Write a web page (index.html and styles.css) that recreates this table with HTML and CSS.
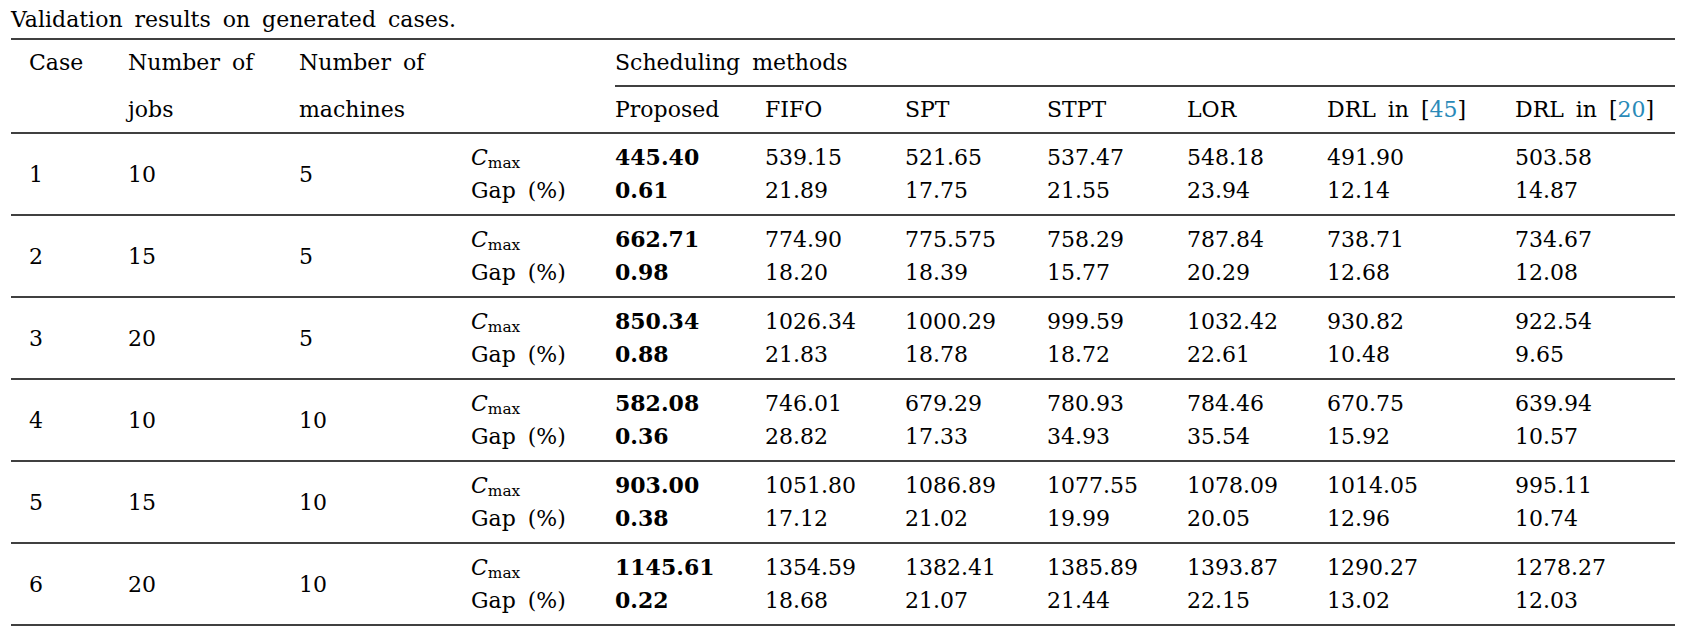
FILE: index.html
```html
<!DOCTYPE html>
<html lang="en">
<head>
<meta charset="utf-8">
<title>Validation results on generated cases</title>
<link rel="stylesheet" href="styles.css">
</head>
<body>
<div class="page">
  <p class="caption">Validation results on generated cases.</p>
  <table class="results">
    <colgroup>
      <col class="c-case"><col class="c-jobs"><col class="c-mach"><col class="c-label">
      <col class="c-prop"><col class="c-fifo"><col class="c-spt"><col class="c-stpt">
      <col class="c-lor"><col class="c-drl45"><col class="c-drl20">
    </colgroup>
    <thead>
      <tr class="h1">
        <th>Case</th>
        <th>Number of</th>
        <th>Number of</th>
        <th></th>
        <th colspan="7" class="group"><div class="group-rule">Scheduling methods</div></th>
      </tr>
      <tr class="h2">
        <th></th>
        <th>jobs</th>
        <th>machines</th>
        <th></th>
        <th>Proposed</th>
        <th>FIFO</th>
        <th>SPT</th>
        <th>STPT</th>
        <th>LOR</th>
        <th>DRL in [<span class="ref">45</span>]</th>
        <th>DRL in [<span class="ref">20</span>]</th>
      </tr>
    </thead>
    <tbody>
      <tr>
        <td>1</td><td>10</td><td>5</td>
        <td class="label"><i>C</i><sub>max</sub><br>Gap (%)</td>
        <td class="best">445.40<br>0.61</td>
        <td>539.15<br>21.89</td>
        <td>521.65<br>17.75</td>
        <td>537.47<br>21.55</td>
        <td>548.18<br>23.94</td>
        <td>491.90<br>12.14</td>
        <td>503.58<br>14.87</td>
      </tr>
      <tr>
        <td>2</td><td>15</td><td>5</td>
        <td class="label"><i>C</i><sub>max</sub><br>Gap (%)</td>
        <td class="best">662.71<br>0.98</td>
        <td>774.90<br>18.20</td>
        <td>775.575<br>18.39</td>
        <td>758.29<br>15.77</td>
        <td>787.84<br>20.29</td>
        <td>738.71<br>12.68</td>
        <td>734.67<br>12.08</td>
      </tr>
      <tr>
        <td>3</td><td>20</td><td>5</td>
        <td class="label"><i>C</i><sub>max</sub><br>Gap (%)</td>
        <td class="best">850.34<br>0.88</td>
        <td>1026.34<br>21.83</td>
        <td>1000.29<br>18.78</td>
        <td>999.59<br>18.72</td>
        <td>1032.42<br>22.61</td>
        <td>930.82<br>10.48</td>
        <td>922.54<br>9.65</td>
      </tr>
      <tr>
        <td>4</td><td>10</td><td>10</td>
        <td class="label"><i>C</i><sub>max</sub><br>Gap (%)</td>
        <td class="best">582.08<br>0.36</td>
        <td>746.01<br>28.82</td>
        <td>679.29<br>17.33</td>
        <td>780.93<br>34.93</td>
        <td>784.46<br>35.54</td>
        <td>670.75<br>15.92</td>
        <td>639.94<br>10.57</td>
      </tr>
      <tr>
        <td>5</td><td>15</td><td>10</td>
        <td class="label"><i>C</i><sub>max</sub><br>Gap (%)</td>
        <td class="best">903.00<br>0.38</td>
        <td>1051.80<br>17.12</td>
        <td>1086.89<br>21.02</td>
        <td>1077.55<br>19.99</td>
        <td>1078.09<br>20.05</td>
        <td>1014.05<br>12.96</td>
        <td>995.11<br>10.74</td>
      </tr>
      <tr>
        <td>6</td><td>20</td><td>10</td>
        <td class="label"><i>C</i><sub>max</sub><br>Gap (%)</td>
        <td class="best">1145.61<br>0.22</td>
        <td>1354.59<br>18.68</td>
        <td>1382.41<br>21.07</td>
        <td>1385.89<br>21.44</td>
        <td>1393.87<br>22.15</td>
        <td>1290.27<br>13.02</td>
        <td>1278.27<br>12.03</td>
      </tr>
    </tbody>
  </table>
</div>
</body>
</html>
```

FILE: styles.css
```css
html, body {
  margin: 0;
  padding: 0;
  background: #ffffff;
}

body {
  font-family: "DejaVu Serif", "Liberation Serif", serif;
  font-size: 22px;
  color: #000000;
  word-spacing: 5px;
}

.page {
  padding: 3px 0 0 11px;
}

.caption {
  margin: 0 0 2px 0;
  line-height: 33px;
}

.results {
  border-collapse: separate;
  border-spacing: 0;
  table-layout: fixed;
  width: 1664px;
  line-height: 33px;
}

.c-case { width: 99px; }
.c-jobs { width: 171px; }
.c-mach { width: 172px; }
.c-label { width: 144px; }
.c-prop { width: 150px; }
.c-fifo { width: 140px; }
.c-spt { width: 142px; }
.c-stpt { width: 140px; }
.c-lor { width: 140px; }
.c-drl45 { width: 188px; }
.c-drl20 { width: 178px; }

.results th,
.results td {
  text-align: left;
  font-weight: normal;
  padding: 7px 0 7px 18px;
  white-space: nowrap;
}

.results thead th {
  vertical-align: top;
  padding-top: 6px;
  padding-bottom: 6px;
}

.results thead tr.h1 th {
  border-top: 2px solid #404040;
}

.results thead tr.h1 th.group {
  padding: 0;
}

.group-rule {
  margin-left: 18px;
  padding: 6px 0 6px 0;
  border-bottom: 2px solid #404040;
}

.results thead tr.h2 th {
  border-bottom: 2px solid #404040;
}

.results tbody td {
  border-bottom: 2px solid #404040;
  vertical-align: middle;
}

.results td.best {
  font-weight: bold;
}

.label i {
  font-style: italic;
}

.label sub {
  font-size: 0.7em;
  line-height: 0;
  vertical-align: -0.22em;
}

.ref {
  color: #2a8ab8;
}
```
